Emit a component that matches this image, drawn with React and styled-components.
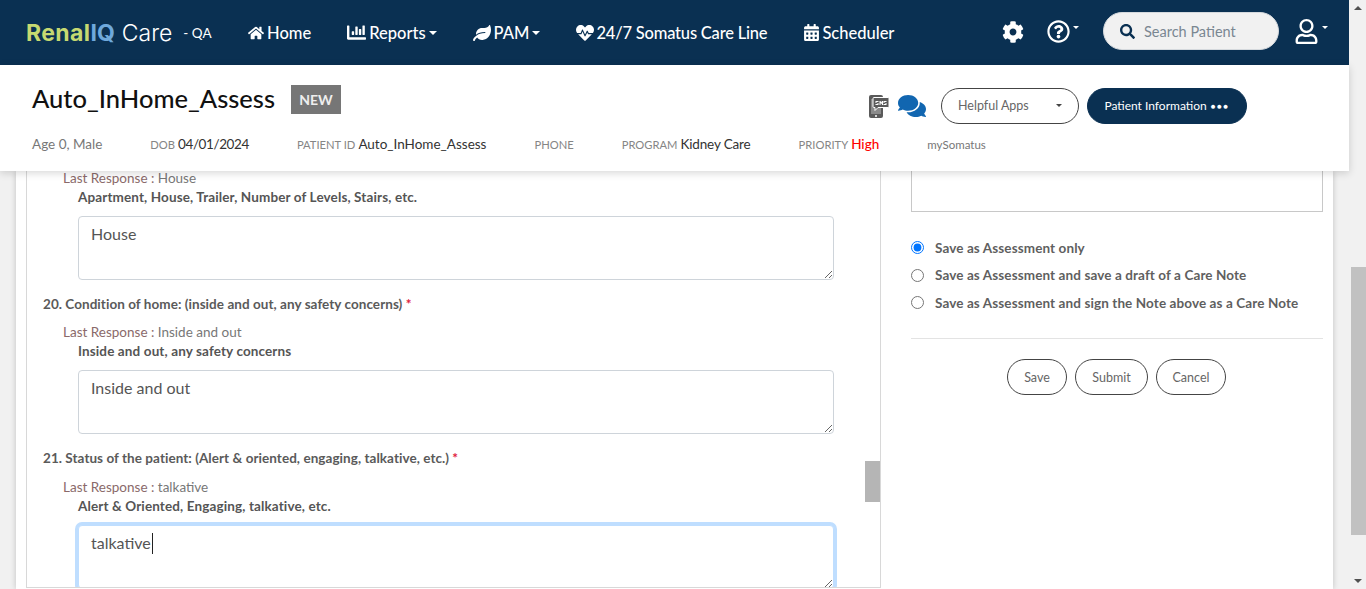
import styled, { createGlobalStyle } from 'styled-components'
import { FaHome, FaChartBar, FaLeaf, FaHeartbeat, FaCalendarAlt, FaCog, FaRegQuestionCircle, FaSearch, FaRegUser, FaComments } from 'react-icons/fa'

const navy = '#0a3052'
const font = 'Lato, "Noto Sans", sans-serif'

const GlobalStyle = createGlobalStyle`
  html, body {
    margin: 0;
    height: 589px;
    overflow: hidden;
    font-family: ${font};
    background: #f1f1f1;
  }
  * { box-sizing: border-box; }
`

const Page = styled.div`
  display: flex;
  width: 1366px;
  height: 589px;
  overflow: hidden;
`

const Main = styled.div`
  display: flex;
  flex-direction: column;
  width: 1349px;
  height: 589px;
`

const PageScroll = styled.div`
  position: relative;
  width: 17px;
  height: 589px;
  background: #f1f1f1;
  padding-top: 267px;
`

const PageThumb = styled.div`
  width: 15px;
  height: 268px;
  margin-left: 2px;
  background: #c1c1c1;
`

const Arrow = styled.div`
  position: absolute;
  left: 5px;
  width: 0;
  height: 0;
  border-left: 4px solid transparent;
  border-right: 4px solid transparent;
  ${p => p.$down
    ? 'bottom: 6px; border-top: 4px solid #505050;'
    : 'top: 6px; border-bottom: 4px solid #505050;'}
`

const Navbar = styled.nav`
  display: flex;
  align-items: center;
  flex: 0 0 65px;
  background: ${navy};
  padding-left: 26px;
  color: #fff;
`

const Logo = styled.div`
  display: flex;
  align-items: center;
  width: 187px;
  height: 32px;
  flex: 0 0 auto;
  font-family: Inter, sans-serif;
  font-size: 23px;
  margin-right: 35px;
  white-space: nowrap;
`

const Renal = styled.span`
  font-weight: 700;
  letter-spacing: 0.4px;
  color: #c6d971;
`

const IQ = styled.span`
  font-weight: 700;
  color: #6fa9dc;
`

const Care = styled.span`
  font-weight: 300;
  margin-left: 7px;
`

const Env = styled.span`
  font-family: ${font};
  font-size: 13.5px;
  margin-left: 11px;
`

const NavItems = styled.div`
  display: flex;
  align-items: center;
  gap: 36px;
`

const NavItem = styled.a`
  display: flex;
  align-items: center;
  gap: ${p => p.$gap || 3}px;
  font-size: 16.5px;
  font-weight: 500;
  letter-spacing: ${p => p.$tight ? -0.2 : 0}px;
  white-space: nowrap;
  svg { font-size: ${p => p.$icon || 16}px; }
`

const Caret = styled.span`
  display: inline-block;
  width: 0;
  height: 0;
  margin-left: ${p => p.$gap || 0}px;
  border-left: ${p => p.$size || 4}px solid transparent;
  border-right: ${p => p.$size || 4}px solid transparent;
  border-top: ${p => p.$size || 4}px solid ${p => p.$color || '#fff'};
`

const NavRight = styled.div`
  display: flex;
  align-items: center;
  margin-left: auto;
  padding: 0 21px 2px 0;
`

const IconBtn = styled.div`
  display: flex;
  align-items: center;
  margin-right: ${p => p.$mr}px;
  font-size: ${p => p.$size}px;
  svg { display: block; }
`

const TinyCaret = styled.span`
  width: 0;
  height: 0;
  margin: 0 0 8px 3px;
  border-left: 3px solid transparent;
  border-right: 3px solid transparent;
  border-top: 3px solid #fff;
`

const Search = styled.div`
  display: flex;
  align-items: center;
  gap: 9px;
  width: 176px;
  height: 38px;
  margin: 0 15px 1px 0;
  padding-left: 16px;
  border-radius: 19px;
  border: 1px solid #d5d9dd;
  background: #f1f1f1;
  color: ${navy};
  font-size: 15px;
`

const SearchText = styled.span`
  color: #7a8791;
  font-size: 14.5px;
`

const PatientBar = styled.header`
  position: relative;
  z-index: 2;
  display: flex;
  flex-direction: column;
  flex: 0 0 106px;
  background: #fff;
  box-shadow: 0 2px 8px rgba(0, 0, 0, 0.16);
  padding: 20px 102px 0 32px;
`

const TopRow = styled.div`
  display: flex;
  align-items: flex-start;
  height: 44px;
`

const PatientName = styled.h1`
  margin: -1px 16px 0 0;
  font-size: 25.5px;
  line-height: 29px;
  font-weight: 500;
  color: #111;
`

const Badge = styled.span`
  width: 50px;
  height: 29px;
  line-height: 29px;
  text-align: center;
  background: #767676;
  color: #eee;
  font-size: 14px;
  font-weight: 700;
`

const Actions = styled.div`
  display: flex;
  align-items: center;
  gap: 8px;
  margin-left: auto;
  margin-top: 3px;
`

const Pill = styled.button`
  display: flex;
  align-items: center;
  justify-content: ${p => p.$between ? 'space-between' : 'center'};
  width: ${p => p.$w}px;
  height: 36px;
  padding: 0 ${p => p.$between ? 16 : 0}px 1px;
  border-radius: 18px;
  border: 1px solid ${p => p.$dark ? navy : '#444'};
  background: ${p => p.$dark ? navy : '#fff'};
  color: ${p => p.$dark ? '#fff' : '#666'};
  font-family: ${font};
  font-size: ${p => p.$dark ? 12 : 12.5}px;
`

const Dots = styled.span`
  margin-left: 4px;
  letter-spacing: 1.5px;
  font-size: 8px;
`

const ChatIcons = styled.div`
  display: flex;
  align-items: center;
  gap: 9px;
  margin-right: 7px;
  color: #1166b0;
  font-size: 28px;
`

const InfoRow = styled.div`
  display: flex;
  align-items: center;
  gap: 48px;
  margin-top: 7px;
  font-size: 13.5px;
  color: #333;
  white-space: nowrap;
`

const Info = styled.div`
  color: ${p => p.$muted ? '#777' : 'inherit'};
  font-size: ${p => p.$small ? 11.5 : 13.5}px;
  letter-spacing: ${p => p.$ls || 0}px;
`

const InfoLabel = styled.span`
  margin-right: ${p => p.$bare ? 0 : 3}px;
  font-size: 11.2px;
  letter-spacing: 0;
  color: #858585;
`

const High = styled.span`
  color: #f00;
  font-weight: 500;
`

const Sheet = styled.div`
  flex: 1;
  min-height: 0;
  display: flex;
  margin-left: 16px;
  width: 1317px;
  padding-left: 10px;
  background: #fff;
  box-shadow: 0 0 6px rgba(0, 0, 0, 0.2);
`

const FormPanel = styled.section`
  position: relative;
  width: 855px;
  height: 417px;
  padding: 0 0 0 17px;
  border-left: 1px solid #d8d8d8;
  border-right: 1px solid #d8d8d8;
  border-bottom: 1px solid #d8d8d8;
  overflow: hidden;
`

const PanelThumb = styled.div`
  position: absolute;
  top: 290px;
  right: 0;
  width: 15px;
  height: 41px;
  background: #b5b5b5;
`

const Question = styled.div`
  margin: ${p => p.$mt}px 0 0 -1px;
  font-size: 13.5px;
  line-height: 18px;
  font-weight: 700;
  letter-spacing: 0.05px;
  color: #5a5a5a;
`

const Star = styled.span`
  color: #e0203c;
`

const LastResponse = styled.div`
  margin: ${p => p.$mt}px 0 0 19px;
  font-size: 13.5px;
  line-height: 18px;
  color: #8a6a6a;
`

const Answer = styled.span`
  color: #777;
`

const Hint = styled.div`
  margin: 1px 0 10px 34px;
  font-size: 13.5px;
  line-height: 18px;
  font-weight: 700;
  letter-spacing: 0.12px;
  color: #555;
`

const FieldWrap = styled.div`
  position: relative;
  width: 756px;
  height: 64px;
  margin-left: 34px;
`

const Area = styled.textarea`
  display: block;
  width: 756px;
  height: 64px;
  padding: 5px 12px;
  border: 1px solid ${p => p.$focus ? '#bfdeff' : '#ced4da'};
  border-radius: 4px;
  box-shadow: ${p => p.$focus ? '0 0 0 3px #bfdeff' : 'none'};
  outline: none;
  resize: vertical;
  font-family: ${font};
  font-size: 16px;
  line-height: 24px;
  color: #555;
  background: #fff;
`

const TextCaret = styled.span`
  position: absolute;
  left: 74px;
  top: 8px;
  width: 1px;
  height: 21px;
  background: #222;
`

const SidePanel = styled.aside`
  display: flex;
  flex-direction: column;
  width: 412px;
  margin-left: 30px;
`

const NoteBox = styled.div`
  height: 41px;
  border: 1px solid #c8c8c8;
  border-top: none;
`

const RadioList = styled.div`
  display: flex;
  flex-direction: column;
  gap: 8.5px;
  margin-top: 26px;
`

const RadioRow = styled.label`
  display: flex;
  align-items: center;
  gap: 11px;
  height: 19px;
  font-size: 13.5px;
  font-weight: 700;
  letter-spacing: 0.1px;
  color: #5f5f5f;
`

const Radio = styled.input`
  width: 13px;
  height: 13px;
  margin: 0;
`

const Divider = styled.hr`
  width: 100%;
  margin: 26px 0 20px;
  border: none;
  border-top: 1px solid #e3e3e3;
`

const ButtonRow = styled.div`
  display: flex;
  justify-content: center;
  gap: 8px;
  padding-right: 1px;
`

const Ghost = styled.button`
  width: ${p => p.$w}px;
  height: 36px;
  padding: 0;
  border: 1px solid #444;
  border-radius: 18px;
  background: #fff;
  color: #666;
  font-family: ${font};
  font-size: 12.5px;
`

const SmsIcon = () => (
  <svg width="21" height="23" viewBox="0 0 21 23">
    <rect x="1" y="0" width="14" height="23" rx="2" fill="#5a5a5a" />
    <rect x="3" y="4" width="10" height="15" fill="#8a8a8a" />
    <circle cx="8" cy="21" r="1" fill="#fff" />
    <path d="M6 2.500h14a1 1 0 0 1 1 1v8a1 1 0 0 1-1 1H10l-3 3v-3H6a1 1 0 0 1-1-1v-8a1 1 0 0 1 1-1z" fill="#5a5a5a" stroke="#fff" strokeWidth="1" />
    <path d="M7.500 6h3v1h-2v1h2v2h-3V9h2V8h-2zM11.500 6h1l.75 1.500L14 6h1v4h-1V8l-.75 1.200L12.500 8v2h-1zM15.500 6h3v1h-2v1h2v2h-3V9h2V8h-2z" fill="#fff" />
  </svg>
)

function App() {
  return (
    <>
      <GlobalStyle />
      <Page>
        <Main>
          <Navbar>
            <Logo>
              <Renal>Renal</Renal><IQ>IQ</IQ><Care>Care</Care><Env>- QA</Env>
            </Logo>
            <NavItems>
              <NavItem><FaHome />Home</NavItem>
              <NavItem $icon={19}><FaChartBar />Reports<Caret /></NavItem>
              <NavItem $icon={18}><FaLeaf />PAM<Caret /></NavItem>
              <NavItem $icon={18} $gap={2} $tight><FaHeartbeat />24/7 Somatus Care Line</NavItem>
              <NavItem $icon={17} $gap={2}><FaCalendarAlt />Scheduler</NavItem>
            </NavItems>
            <NavRight>
              <IconBtn $size={22} $mr={23}><FaCog /></IconBtn>
              <IconBtn $size={23} $mr={24}><FaRegQuestionCircle /><TinyCaret /></IconBtn>
              <Search><FaSearch /><SearchText>Search Patient</SearchText></Search>
              <IconBtn $size={25} $mr={0}><FaRegUser /><TinyCaret /></IconBtn>
            </NavRight>
          </Navbar>

          <PatientBar>
            <TopRow>
              <PatientName>Auto_InHome_Assess</PatientName>
              <Badge>NEW</Badge>
              <Actions>
                <ChatIcons><SmsIcon /><FaComments /></ChatIcons>
                <Pill $w={138} $between>Helpful Apps<Caret $color="#444" $size={3} /></Pill>
                <Pill $w={160} $dark>Patient Information<Dots>●●●</Dots></Pill>
              </Actions>
            </TopRow>
            <InfoRow>
              <Info $muted>Age 0, Male</Info>
              <Info $ls={-0.4}><InfoLabel>DOB</InfoLabel>04/01/2024</Info>
              <Info><InfoLabel>PATIENT ID</InfoLabel>Auto_InHome_Assess</Info>
              <Info><InfoLabel $bare>PHONE</InfoLabel></Info>
              <Info $ls={-0.15}><InfoLabel>PROGRAM</InfoLabel>Kidney Care</Info>
              <Info><InfoLabel>PRIORITY</InfoLabel><High>High</High></Info>
              <Info $muted $small>mySomatus</Info>
            </InfoRow>
          </PatientBar>

          <Sheet>
            <FormPanel>
              <LastResponse $mt={-2}>Last Response : <Answer>House</Answer></LastResponse>
              <Hint>Apartment, House, Trailer, Number of Levels, Stairs, etc.</Hint>
              <FieldWrap><Area readOnly value="House" /></FieldWrap>

              <Question $mt={15}>20. Condition of home: (inside and out, any safety concerns) <Star>*</Star></Question>
              <LastResponse $mt={10}>Last Response : <Answer>Inside and out</Answer></LastResponse>
              <Hint>Inside and out, any safety concerns</Hint>
              <FieldWrap><Area readOnly value="Inside and out" /></FieldWrap>

              <Question $mt={15}>21. Status of the patient: (Alert &amp; oriented, engaging, talkative, etc.) <Star>*</Star></Question>
              <LastResponse $mt={11}>Last Response : <Answer>talkative</Answer></LastResponse>
              <Hint>Alert &amp; Oriented, Engaging, talkative, etc.</Hint>
              <FieldWrap>
                <Area $focus readOnly value="talkative" />
                <TextCaret />
              </FieldWrap>
              <PanelThumb />
            </FormPanel>

            <SidePanel>
              <NoteBox />
              <RadioList>
                <RadioRow><Radio type="radio" name="saveAs" defaultChecked />Save as Assessment only</RadioRow>
                <RadioRow><Radio type="radio" name="saveAs" />Save as Assessment and save a draft of a Care Note</RadioRow>
                <RadioRow><Radio type="radio" name="saveAs" />Save as Assessment and sign the Note above as a Care Note</RadioRow>
              </RadioList>
              <Divider />
              <ButtonRow>
                <Ghost $w={60}>Save</Ghost>
                <Ghost $w={73}>Submit</Ghost>
                <Ghost $w={70}>Cancel</Ghost>
              </ButtonRow>
            </SidePanel>
          </Sheet>
        </Main>

        <PageScroll>
          <Arrow />
          <PageThumb />
          <Arrow $down />
        </PageScroll>
      </Page>
    </>
  )
}

export default App
